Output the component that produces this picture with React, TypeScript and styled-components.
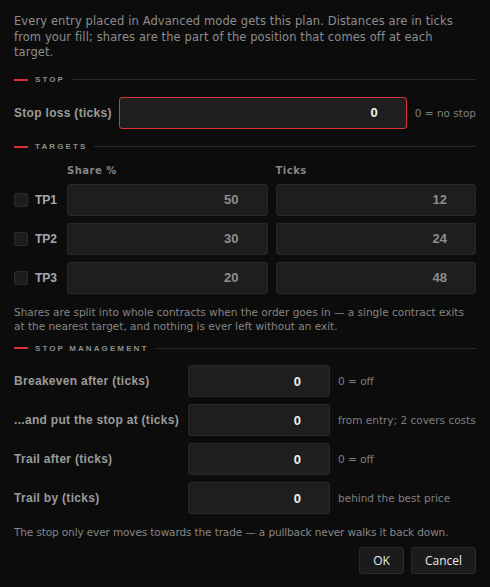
import styled, { createGlobalStyle } from 'styled-components';

const GlobalStyle = createGlobalStyle`
  html, body {
    margin: 0;
    padding: 0;
    background: #0c0c0c;
  }
`;

const textFont = `"DejaVu Sans", Verdana, sans-serif`;
const labelFont = `"Liberation Sans", Arial, sans-serif`;
const uiFont = `"Open Sans", "Noto Sans", sans-serif`;

export const Dialog = styled.div`
  width: 490px;
  height: 587px;
  box-sizing: border-box;
  padding: 14px 14px 0 14px;
  background: #0c0c0c;
  font-family: ${textFont};
  color: #8a8a8a;
  display: flex;
  flex-direction: column;
`;

export const Intro = styled.p`
  margin: 0;
  max-width: 454px;
  font-size: 11.5px;
  line-height: 15.5px;
  letter-spacing: 0.1px;
  color: #8c8c8c;
`;

export const Note = styled.p<{ top: number; tight?: boolean }>`
  margin: ${({ top }) => top}px 0 0 0;
  font-size: 10.5px;
  line-height: 14.3px;
  letter-spacing: ${({ tight }) => (tight ? '-0.12px' : '0')};
  color: #858585;
`;

export const SectionHead = styled.div<{ top: number }>`
  display: flex;
  align-items: center;
  margin-top: ${({ top }) => top}px;
  height: 12px;

  &::before {
    content: '';
    width: 14px;
    height: 2px;
    background: #e03131;
    margin-right: 7px;
  }

  & > span {
    font-family: ${labelFont};
    font-size: 8px;
    font-weight: 700;
    letter-spacing: 2.1px;
    color: #8d8d8d;
    margin-right: 7px;
  }

  &::after {
    content: '';
    flex: 1;
    height: 1px;
    background: #2a2a2a;
  }
`;

export const Label = styled.span<{ width: number }>`
  width: ${({ width }) => width}px;
  flex-shrink: 0;
  font-family: ${labelFont};
  font-size: 12px;
  font-weight: 700;
  letter-spacing: 0.3px;
  color: #9a9a9a;
`;

export const Row = styled.div<{ top: number }>`
  display: flex;
  align-items: center;
  margin-top: ${({ top }) => top}px;
  height: 32px;
`;

export const Field = styled.div<{ width?: number; alert?: boolean; muted?: boolean }>`
  box-sizing: border-box;
  height: 32px;
  width: ${({ width }) => (width ? `${width}px` : 'auto')};
  flex: ${({ width }) => (width ? '0 0 auto' : '1')};
  background: #1e1e1e;
  border: 1px solid ${({ alert }) => (alert ? '#d8353a' : '#2a2a2a')};
  border-radius: 3px;
  display: flex;
  align-items: center;
  justify-content: flex-end;
  padding-right: 28px;
  font-family: ${labelFont};
  font-size: 13px;
  font-weight: 700;
  color: ${({ muted }) => (muted ? '#8e8e8e' : '#f2f2f2')};
`;

export const Hint = styled.span`
  margin-left: 8px;
  font-size: 10.5px;
  color: #7f7f7f;
  white-space: nowrap;
`;

export const TargetGrid = styled.div`
  display: grid;
  grid-template-columns: 45px 1fr 1fr;
  column-gap: 8px;
  row-gap: 7px;
  margin-top: 11px;
  align-items: center;
`;

export const ColHead = styled.span`
  font-size: 10px;
  font-weight: 700;
  letter-spacing: 0.5px;
  color: #858585;
  height: 13px;
  line-height: 13px;
`;

export const TargetName = styled.label`
  display: flex;
  align-items: center;
  gap: 7px;
  font-family: ${labelFont};
  font-size: 12px;
  font-weight: 700;
  color: #a4a9ae;
`;

export const Check = styled.span`
  box-sizing: border-box;
  width: 14px;
  height: 14px;
  border-radius: 2px;
  background: #1d1d1d;
  border: 1px solid #2c2c2c;
`;

export const Footer = styled.div`
  display: flex;
  justify-content: flex-end;
  gap: 7px;
  margin-top: 8px;
`;

export const Button = styled.button<{ width: number }>`
  width: ${({ width }) => width}px;
  height: 27px;
  background: #1b1b1b;
  border: 1px solid #2a2a2a;
  border-radius: 3px;
  color: #e8e8e8;
  font-family: ${uiFont};
  font-size: 12px;
  padding: 0;
`;

const targets = [
  { name: 'TP1', share: 50, ticks: 12 },
  { name: 'TP2', share: 30, ticks: 24 },
  { name: 'TP3', share: 20, ticks: 48 },
];

const management = [
  { label: 'Breakeven after (ticks)', hint: '0 = off' },
  { label: '...and put the stop at (ticks)', hint: 'from entry; 2 covers costs' },
  { label: 'Trail after (ticks)', hint: '0 = off' },
  { label: 'Trail by (ticks)', hint: 'behind the best price' },
];

export default function App() {
  return (
    <>
      <GlobalStyle />
      <Dialog>
        <Intro>
          Every entry placed in Advanced mode gets this plan. Distances are in ticks from your fill; shares
          are the part of the position that comes off at each target.
        </Intro>

        <SectionHead top={13}>
          <span>STOP</span>
        </SectionHead>
        <Row top={11}>
          <Label width={105}>Stop loss (ticks)</Label>
          <Field alert>0</Field>
          <Hint>0 = no stop</Hint>
        </Row>

        <SectionHead top={12}>
          <span>TARGETS</span>
        </SectionHead>
        <TargetGrid>
          <span />
          <ColHead>Share %</ColHead>
          <ColHead>Ticks</ColHead>
          {targets.map((t) => (
            <>
              <TargetName key={t.name}>
                <Check />
                {t.name}
              </TargetName>
              <Field muted>{t.share}</Field>
              <Field muted>{t.ticks}</Field>
            </>
          ))}
        </TargetGrid>
        <Note top={11}>
          Shares are split into whole contracts when the order goes in — a single contract exits at the
          nearest target, and nothing is ever left without an exit.
        </Note>

        <SectionHead top={9}>
          <span>STOP MANAGEMENT</span>
        </SectionHead>
        {management.map((m, i) => (
          <Row key={m.label} top={i === 0 ? 11 : 7}>
            <Label width={174}>{m.label}</Label>
            <Field width={142}>0</Field>
            <Hint>{m.hint}</Hint>
          </Row>
        ))}
        <Note top={11} tight>
          The stop only ever moves towards the trade — a pullback never walks it back down.
        </Note>

        <Footer>
          <Button width={45}>OK</Button>
          <Button width={65}>Cancel</Button>
        </Footer>
      </Dialog>
    </>
  );
}
